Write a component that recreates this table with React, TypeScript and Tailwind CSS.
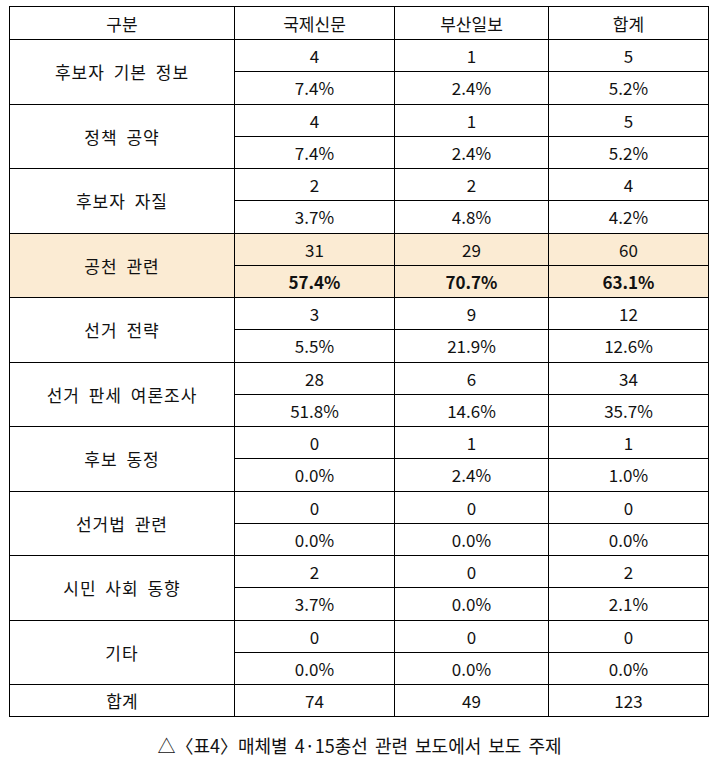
const rows = [
  { label: "후보자 기본 정보", n: ["4", "1", "5"], p: ["7.4%", "2.4%", "5.2%"] },
  { label: "정책 공약", n: ["4", "1", "5"], p: ["7.4%", "2.4%", "5.2%"] },
  { label: "후보자 자질", n: ["2", "2", "4"], p: ["3.7%", "4.8%", "4.2%"] },
  { label: "공천 관련", n: ["31", "29", "60"], p: ["57.4%", "70.7%", "63.1%"], hl: true },
  { label: "선거 전략", n: ["3", "9", "12"], p: ["5.5%", "21.9%", "12.6%"] },
  { label: "선거 판세 여론조사", n: ["28", "6", "34"], p: ["51.8%", "14.6%", "35.7%"] },
  { label: "후보 동정", n: ["0", "1", "1"], p: ["0.0%", "2.4%", "1.0%"] },
  { label: "선거법 관련", n: ["0", "0", "0"], p: ["0.0%", "0.0%", "0.0%"] },
  { label: "시민 사회 동향", n: ["2", "0", "2"], p: ["3.7%", "0.0%", "2.1%"] },
  { label: "기타", n: ["0", "0", "0"], p: ["0.0%", "0.0%", "0.0%"] },
];

const cell = "border border-black text-center align-middle p-0";

export default function App() {
  return (
    <div
      className="w-[719px] h-[757px] bg-white text-[17px] text-[#111]"
      style={{ fontFamily: '"Noto Sans CJK KR", "Noto Sans", sans-serif' }}
    >
      <div className="pt-[6px] pl-[9px]">
        <table className="table-fixed border-collapse w-[699px] leading-none">
          <colgroup>
            <col className="w-[225px]" />
            <col className="w-[160px]" />
            <col className="w-[154px]" />
            <col className="w-[160px]" />
          </colgroup>
          <tbody>
            <tr className="h-[33px]">
              <td className={cell}>구분</td>
              <td className={cell}>국제신문</td>
              <td className={cell}>부산일보</td>
              <td className={cell}>합계</td>
            </tr>
            {rows.map((r) => (
              <>
                <tr key={r.label + "n"} className={`h-[32.25px] ${r.hl ? "bg-[#fbebd3]" : ""}`}>
                  <td rowSpan={2} className={`${cell} tracking-[1px] [word-spacing:4px]`}>
                    {r.label}
                  </td>
                  {r.n.map((v, i) => (
                    <td key={i} className={cell}>
                      {v}
                    </td>
                  ))}
                </tr>
                <tr key={r.label + "p"} className={`h-[32.25px] ${r.hl ? "bg-[#fbebd3]" : ""}`}>
                  {r.p.map((v, i) => (
                    <td key={i} className={`${cell} ${r.hl ? "font-bold" : ""}`}>
                      {v}
                    </td>
                  ))}
                </tr>
              </>
            ))}
            <tr className="h-[32px]">
              <td className={cell}>합계</td>
              <td className={cell}>74</td>
              <td className={cell}>49</td>
              <td className={cell}>123</td>
            </tr>
          </tbody>
        </table>
      </div>
      <p className="mt-[19px] text-center text-[18px] leading-none [word-spacing:3px]">
        △〈표4〉매체별 4·15총선 관련 보도에서 보도 주제
      </p>
    </div>
  );
}
